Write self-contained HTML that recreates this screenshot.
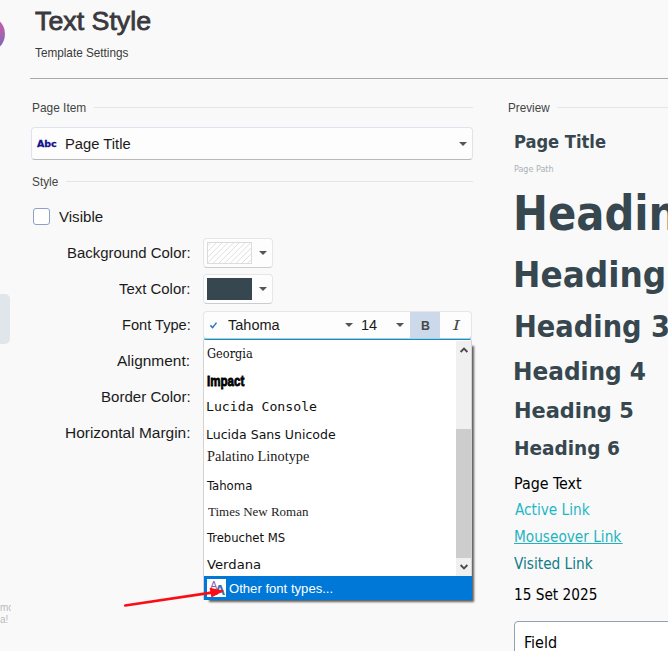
<!DOCTYPE html>
<html>
<head>
<meta charset="utf-8">
<title>Text Style</title>
<style>
*{box-sizing:border-box;margin:0;padding:0}
html,body{width:668px;height:651px;overflow:hidden;background:#f9f9f9}
body{position:relative;font-family:"Liberation Sans","DejaVu Sans",sans-serif;color:#1b1b1b;font-size:15px}
.a{position:absolute;white-space:nowrap;line-height:1;transform-origin:0 50%}
.hl{position:absolute;height:1px;background:#e5e5e5}
.cbtn{position:absolute;left:203px;width:70px;height:30px;background:#fdfdfd;border:1px solid #e3e6ec;border-bottom-color:#c9ccd2;border-radius:4px}
.cbtn .sw{position:absolute;left:3px;top:3px;width:45px;height:22px}
.tri{position:absolute;width:0;height:0;border-left:4px solid transparent;border-right:4px solid transparent;border-top:4px solid #555}
</style>
</head>
<body>

<!-- left strip fragments -->
<div class="a" style="left:-31.8px;top:15.7px;width:36.8px;height:36.8px;border-radius:50%;background:linear-gradient(180deg,#c858a4 14%,#a864b0 50%,#7668ba 86%)"></div>
<div class="a" style="left:-6px;top:294px;width:16px;height:50px;border-radius:5px;background:#e1e6eb"></div>
<div class="a" style="left:0;top:602px;width:11px;height:24px;overflow:hidden;color:#b9b9b9;font-size:10px"><span class="a" style="left:0;top:1px">mo</span><span class="a" style="left:0;top:13px">a!</span></div>

<!-- header rule -->
<div class="hl" style="left:30px;top:78px;width:638px;background:#a9a9a9"></div>

<!-- Page item -->
<div class="hl" style="left:94px;top:107px;width:379px"></div>
<div class="a" style="left:30.5px;top:127.3px;width:442.2px;height:33px;background:#fdfdfd;border:1px solid #dfe4ec;border-bottom-color:#b9b9b9;border-radius:4px"></div>
<div class="tri" style="left:458.5px;top:142px"></div>

<!-- Style -->
<div class="hl" style="left:66px;top:181px;width:407px"></div>
<div class="a" style="left:33px;top:208px;width:17px;height:17px;background:#fff;border:1px solid #8f9fc7;border-radius:3px"></div>

<!-- colour buttons -->
<div class="cbtn" style="top:238px"><svg class="sw" viewBox="0 0 45 22" style="background:#fff;border:1px solid #dcdcdc;overflow:hidden"><g stroke="#d2d2d2" stroke-width="0.8" fill="none"><path d="M-20.5 22 L1.5 0"/><path d="M-14.2 22 L7.8 0"/><path d="M-7.9 22 L14.1 0"/><path d="M-1.6 22 L20.4 0"/><path d="M4.7 22 L26.7 0"/><path d="M11.0 22 L33.0 0"/><path d="M17.3 22 L39.3 0"/><path d="M23.6 22 L45.6 0"/><path d="M29.9 22 L51.9 0"/><path d="M36.2 22 L58.2 0"/><path d="M42.5 22 L64.5 0"/><path d="M48.8 22 L70.8 0"/></g></svg><div class="tri" style="left:55px;top:12px"></div></div>
<div class="cbtn" style="top:274px"><div class="sw" style="background:#37474f"></div><div class="tri" style="left:55px;top:12px"></div></div>

<!-- font combo -->
<div class="a" style="left:203px;top:310.5px;width:269px;height:29.5px;background:#fdfdfd;border:1px solid #e6e6e6;border-bottom:1px solid #1c8cb8;border-radius:4px 4px 3px 3px;box-shadow:inset 0 -1px 0 rgba(28,140,184,.4)"></div>
<svg class="a" style="left:208px;top:320px" width="12" height="10" viewBox="208 320 12 10"><path d="M210.4 325.4 L212.6 327.6 L216.5 322.6" fill="none" stroke="#2f72c4" stroke-width="1.5"/></svg>
<div class="tri" style="left:345px;top:323px"></div>
<div class="tri" style="left:396px;top:323px"></div>
<div class="a" style="left:410px;top:312px;width:30px;height:26px;background:#ccd9ea"></div>

<!-- dropdown list -->
<div class="a" style="left:203px;top:340px;width:269px;height:260px;background:#fff;border-left:1px solid #d6d2d2;border-right:1px solid #d6d2d2;box-shadow:4px 4px 2px -2px rgba(0,0,0,.62)"></div>
<div class="a" style="left:456px;top:341px;width:15px;height:235px;background:#f0f0f0"></div>
<div class="a" style="left:456px;top:429px;width:15px;height:129px;background:#cdcdcd"></div>
<svg class="a" style="left:459px;top:346px" width="10" height="8" viewBox="0 0 10 8"><path d="M1.6 6 L5 2.6 L8.4 6" fill="none" stroke="#4a4a4a" stroke-width="1.9"/></svg>
<svg class="a" style="left:459px;top:563px" width="10" height="8" viewBox="0 0 10 8"><path d="M1.6 2 L5 5.4 L8.4 2" fill="none" stroke="#4a4a4a" stroke-width="1.9"/></svg>

<div class="a" style="left:204px;top:576px;width:268px;height:24px;background:#0078d7"></div>
<div class="a" style="left:207px;top:578.6px;width:19px;height:18.4px;background:#fff"></div>
<div class="a" style="left:210.2px;top:580.2px;font-size:10.5px;color:#8e5bb5;font-family:'Liberation Sans',sans-serif">A</div>
<div class="a" style="left:214.6px;top:581.6px;font-size:15px;font-weight:bold;color:#3b6db0;font-family:'Liberation Sans',sans-serif">A</div>

<!-- preview chrome -->
<div class="hl" style="left:557px;top:107px;width:111px"></div>
<div class="a" style="left:514px;top:621px;width:200px;height:40px;background:#fff;border:1px solid #90a4ae;border-radius:4px"></div>

<div class="a" id="title" style="left:35.42px;top:7.61px;font-size:26px;font-family:'Liberation Sans','DejaVu Sans',sans-serif;color:#3a393d;-webkit-text-stroke:0.8px #3a393d;transform:scaleX(1.0295)">Text Style</div>
<div class="a" id="sub" style="left:35.44px;top:46.31px;font-size:13px;font-family:'Liberation Sans','DejaVu Sans',sans-serif;color:#3a3a3a;transform:scaleX(0.9041)">Template Settings</div>
<div class="a" id="s1" style="left:32.40px;top:101.80px;font-size:12.2px;font-family:'Liberation Sans','DejaVu Sans',sans-serif;color:#444;transform:scaleX(0.9760)">Page Item</div>
<div class="a" id="s2" style="left:32.18px;top:176.10px;font-size:12.2px;font-family:'Liberation Sans','DejaVu Sans',sans-serif;color:#444;transform:scaleX(0.9689)">Style</div>
<div class="a" id="s3" style="left:507.74px;top:101.91px;font-size:12.2px;font-family:'Liberation Sans','DejaVu Sans',sans-serif;color:#444;transform:scaleX(0.9603)">Preview</div>
<div class="a" id="abc" style="left:37.27px;top:139.31px;font-size:9.4px;font-family:'DejaVu Sans','Liberation Sans',sans-serif;color:#12128a;font-weight:bold;-webkit-text-stroke:0.3px #12128a;transform:scaleX(1.0099)">Abc</div>
<div class="a" id="pti" style="left:64.83px;top:135.82px;font-size:15.2px;font-family:'Liberation Sans','DejaVu Sans',sans-serif;color:#1b1b1b;transform:scaleX(0.9714)">Page Title</div>
<div class="a" id="vis" style="left:59.16px;top:208.82px;font-size:15.2px;font-family:'Liberation Sans','DejaVu Sans',sans-serif;color:#1b1b1b;transform:scaleX(0.9920)">Visible</div>
<div class="a" id="l1" style="left:67.19px;top:244.90px;font-size:15.2px;font-family:'Liberation Sans','DejaVu Sans',sans-serif;color:#1b1b1b;transform:scaleX(0.9822)">Background Color:</div>
<div class="a" id="l2" style="left:119.43px;top:280.90px;font-size:15.2px;font-family:'Liberation Sans','DejaVu Sans',sans-serif;color:#1b1b1b;transform:scaleX(0.9829)">Text Color:</div>
<div class="a" id="l3" style="left:121.86px;top:316.90px;font-size:15.2px;font-family:'Liberation Sans','DejaVu Sans',sans-serif;color:#1b1b1b;transform:scaleX(0.9627)">Font Type:</div>
<div class="a" id="l4" style="left:117.39px;top:352.90px;font-size:15.2px;font-family:'Liberation Sans','DejaVu Sans',sans-serif;color:#1b1b1b;transform:scaleX(1.0170)">Alignment:</div>
<div class="a" id="l5" style="left:100.70px;top:388.90px;font-size:15.2px;font-family:'Liberation Sans','DejaVu Sans',sans-serif;color:#1b1b1b;transform:scaleX(0.9929)">Border Color:</div>
<div class="a" id="l6" style="left:65.01px;top:424.90px;font-size:15.2px;font-family:'Liberation Sans','DejaVu Sans',sans-serif;color:#1b1b1b;transform:scaleX(1.0183)">Horizontal Margin:</div>
<div class="a" id="tah" style="left:227.92px;top:316.72px;font-size:15.2px;font-family:'Liberation Sans','DejaVu Sans',sans-serif;color:#1b1b1b;transform:scaleX(0.9557)">Tahoma</div>
<div class="a" id="n14" style="left:361.11px;top:316.90px;font-size:15.2px;font-family:'Liberation Sans','DejaVu Sans',sans-serif;color:#1b1b1b;transform:scaleX(0.9587)">14</div>
<div class="a" id="bb" style="left:421.01px;top:318.91px;font-size:13px;font-family:'Liberation Sans','DejaVu Sans',sans-serif;color:#484848;font-weight:bold;transform:scaleX(0.9527)">B</div>
<div class="a" id="ii" style="left:452.74px;top:319.91px;font-size:12.2px;font-family:'DejaVu Serif','Liberation Serif',serif;color:#484848;font-style:italic;transform:scaleX(1.4664)">I</div>
<div class="a" id="f1" style="left:206.81px;top:347.91px;font-size:12.8px;font-family:'DejaVu Serif','Liberation Serif',serif;color:#111;transform:scaleX(0.8876)">Georgia</div>
<div class="a" id="f2" style="left:207.29px;top:372.90px;font-size:15px;font-family:'Liberation Sans','DejaVu Sans',sans-serif;color:#000;font-weight:bold;-webkit-text-stroke:0.8px #000;transform:scaleX(0.7719)">Impact</div>
<div class="a" id="f3" style="left:205.60px;top:401.00px;font-size:12.2px;font-family:'DejaVu Sans Mono','Liberation Mono',monospace;color:#111;transform:scaleX(1.0808)">Lucida Console</div>
<div class="a" id="f4" style="left:206.30px;top:429.10px;font-size:12.5px;font-family:'DejaVu Sans','Liberation Sans',sans-serif;color:#111;transform:scaleX(1.0025)">Lucida Sans Unicode</div>
<div class="a" id="f5" style="left:206.70px;top:449.91px;font-size:13.8px;font-family:'Liberation Serif','DejaVu Serif',serif;color:#222;transform:scaleX(1.0395)">Palatino Linotype</div>
<div class="a" id="f6" style="left:207.22px;top:478.81px;font-size:13px;font-family:'DejaVu Sans Condensed','DejaVu Sans',sans-serif;color:#111;transform:scaleX(1.0013)">Tahoma</div>
<div class="a" id="f7" style="left:208.39px;top:505.01px;font-size:13px;font-family:'Liberation Serif','DejaVu Serif',serif;color:#222;transform:scaleX(0.9977)">Times New Roman</div>
<div class="a" id="f8" style="left:207.29px;top:531.81px;font-size:12.8px;font-family:'DejaVu Sans Condensed','DejaVu Sans',sans-serif;color:#111;transform:scaleX(1.0087)">Trebuchet MS</div>
<div class="a" id="f9" style="left:207.27px;top:558.01px;font-size:13px;font-family:'DejaVu Sans','Liberation Sans',sans-serif;color:#111;transform:scaleX(1.0141)">Verdana</div>
<div class="a" id="oth" style="left:229.01px;top:582.11px;font-size:13.3px;font-family:'Liberation Sans','DejaVu Sans',sans-serif;color:#fff;transform:scaleX(0.9854)">Other font types...</div>
<div class="a" id="p0" style="left:513.83px;top:133.81px;font-size:17.5px;font-family:'DejaVu Sans Condensed','DejaVu Sans',sans-serif;color:#37474f;font-weight:bold;transform:scaleX(1.0354)">Page Title</div>
<div class="a" id="p0b" style="left:514.22px;top:164.71px;font-size:8.5px;font-family:'DejaVu Sans Condensed','DejaVu Sans',sans-serif;color:#a9b1b6;transform:scaleX(1.0510)">Page Path</div>
<div class="a" id="p1" style="left:513.10px;top:189.91px;font-size:47.6px;font-family:'DejaVu Sans Condensed','DejaVu Sans',sans-serif;color:#37474f;font-weight:bold;transform:scaleX(0.9750)">Heading 1</div>
<div class="a" id="p2" style="left:513.22px;top:256.81px;font-size:36px;font-family:'DejaVu Sans Condensed','DejaVu Sans',sans-serif;color:#37474f;font-weight:bold;transform:scaleX(1.0120)">Heading 2</div>
<div class="a" id="p3" style="left:513.78px;top:313.01px;font-size:29.6px;font-family:'DejaVu Sans Condensed','DejaVu Sans',sans-serif;color:#37474f;font-weight:bold;transform:scaleX(1.0250)">Heading 3</div>
<div class="a" id="p4" style="left:513.48px;top:360.21px;font-size:24.4px;font-family:'DejaVu Sans Condensed','DejaVu Sans',sans-serif;color:#37474f;font-weight:bold;transform:scaleX(1.0589)">Heading 4</div>
<div class="a" id="p5" style="left:513.60px;top:400.41px;font-size:21.4px;font-family:'DejaVu Sans Condensed','DejaVu Sans',sans-serif;color:#37474f;font-weight:bold;transform:scaleX(1.0873)">Heading 5</div>
<div class="a" id="p6" style="left:514.09px;top:437.91px;font-size:20px;font-family:'DejaVu Sans Condensed','DejaVu Sans',sans-serif;color:#37474f;font-weight:bold;transform:scaleX(1.0280)">Heading 6</div>
<div class="a" id="q1" style="left:513.69px;top:475.71px;font-size:16px;font-family:'DejaVu Sans Condensed','DejaVu Sans',sans-serif;color:#000;transform:scaleX(0.9927)">Page Text</div>
<div class="a" id="q2" style="left:514.75px;top:502.01px;font-size:16px;font-family:'DejaVu Sans Condensed','DejaVu Sans',sans-serif;color:#1cb8c8;transform:scaleX(0.9501)">Active Link</div>
<div class="a" id="q3" style="left:514.38px;top:528.61px;font-size:16px;font-family:'DejaVu Sans Condensed','DejaVu Sans',sans-serif;color:#1fb3c0;text-decoration:underline;transform:scaleX(0.9503)">Mouseover Link&#8202;</div>
<div class="a" id="q4" style="left:514.45px;top:555.71px;font-size:16px;font-family:'DejaVu Sans Condensed','DejaVu Sans',sans-serif;color:#0f7c87;transform:scaleX(0.9511)">Visited Link</div>
<div class="a" id="q5" style="left:514.25px;top:586.91px;font-size:16px;font-family:'DejaVu Sans Condensed','DejaVu Sans',sans-serif;color:#000;transform:scaleX(0.9499)">15 Set 2025</div>
<div class="a" id="q6" style="left:524.13px;top:634.91px;font-size:16px;font-family:'DejaVu Sans Condensed','DejaVu Sans',sans-serif;color:#000;transform:scaleX(0.9997)">Field</div>

<!-- red arrow -->
<svg class="a" style="left:110px;top:570px" width="130" height="50" viewBox="110 570 130 50"><path d="M125.2 605.5 L211.5 592.6" stroke="#fb0d16" stroke-width="2.6" fill="none" stroke-linecap="round"/><path d="M224.4 590.7 L209.6 587.7 L211.4 597.4 Z" fill="#fb0d16"/></svg>

</body>
</html>
